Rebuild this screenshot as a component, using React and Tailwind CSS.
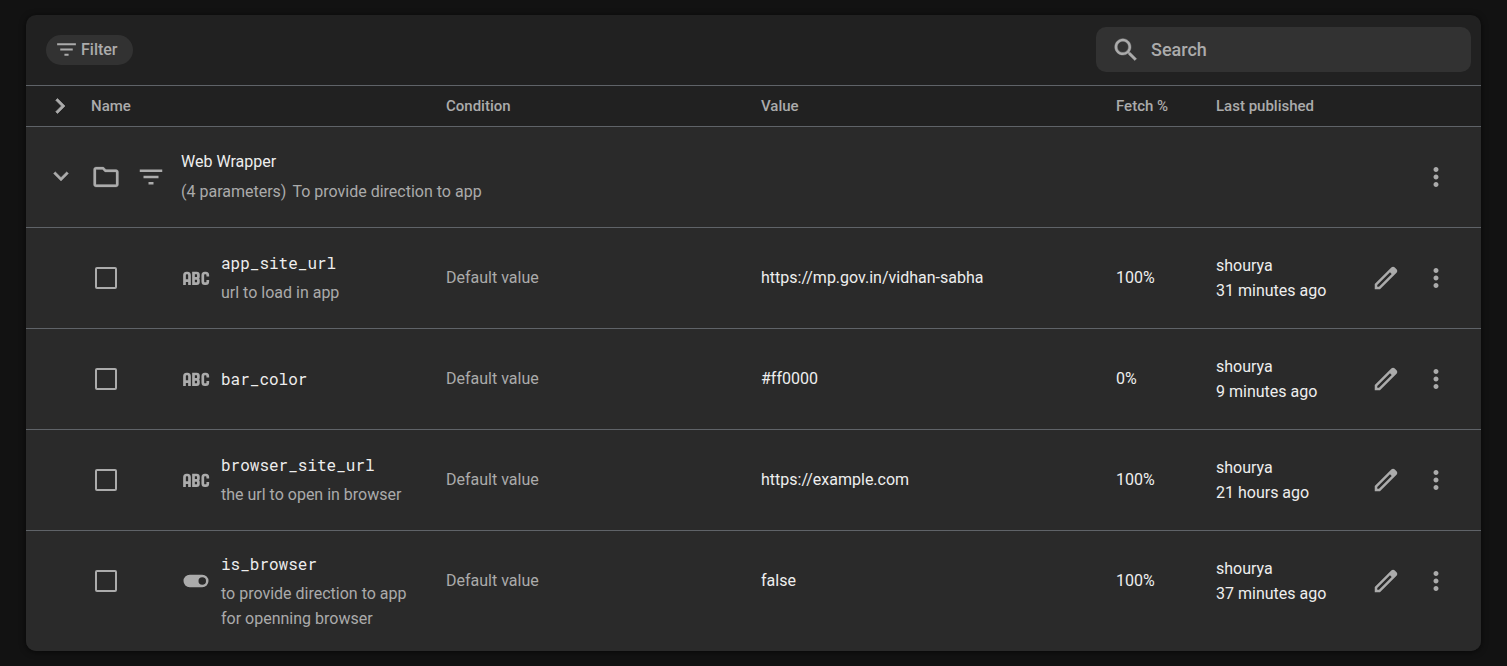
import React from "react";

const Icon = ({ d, weight = 0, className = "size-[30px]" }) => (
  <svg
    viewBox="0 0 24 24"
    fill="currentColor"
    stroke="currentColor"
    strokeWidth={weight}
    className={"shrink-0 " + className}
    aria-hidden="true"
  >
    <path d={d} fillRule="evenodd" />
  </svg>
);

const icons = {
  filter: "M10 18h4v-2h-4v2zM3 6v2h18V6H3zm3 7h12v-2H6v2z",
  right: "M10 6L8.59 7.41 13.17 12l-4.58 4.59L10 18l6-6z",
  down: "M7.41 8.59L12 13.17l4.59-4.58L18 10l-6 6-6-6z",
  folder: "M9.17 6l2 2H20v10H4V6h5.17M10 4H4c-1.1 0-1.99.9-1.99 2L2 18c0 1.1.9 2 2 2h16c1.1 0 2-.9 2-2V8c0-1.1-.9-2-2-2h-8l-2-2z",
  search: "M15.5 14h-.79l-.28-.27C15.41 12.59 16 11.11 16 9.5 16 5.91 13.09 3 9.5 3S3 5.91 3 9.5 5.91 16 9.5 16c1.61 0 3.09-.59 4.23-1.57l.27.28v.79l5 4.99L20.49 19l-4.99-5zm-6 0C7.01 14 5 11.99 5 9.5S7.01 5 9.5 5 14 7.01 14 9.5 11.99 14 9.5 14z",
  more: "M12 8c1.1 0 2-.9 2-2s-.9-2-2-2-2 .9-2 2 .9 2 2 2zm0 2c-1.1 0-2 .9-2 2s.9 2 2 2 2-.9 2-2-.9-2-2-2zm0 6c-1.1 0-2 .9-2 2s.9 2 2 2 2-.9 2-2-.9-2-2-2z",
  edit: "M20.41 4.94l-1.35-1.35c-.78-.78-2.05-.78-2.83 0L3 16.82V21h4.18L20.41 7.77c.79-.78.79-2.05 0-2.83zM6.35 19H5v-1.35L15.200 7.450l1.350 1.350L6.35 19z",
  toggle: "M7 7h10a5 5 0 0 1 0 10H7A5 5 0 0 1 7 7zm10 2a3 3 0 1 0 0 6 3 3 0 0 0 0-6z",
};

const AbcIcon = () => (
  <svg
    viewBox="0 0 30 30"
    fill="none"
    stroke="currentColor"
    strokeWidth="2.700"
    className="size-[30px] shrink-0"
    aria-label="String"
    role="img"
  >
    <path d="M3.500 22V12.200q0-2.200 2-2.200h1q2 0 2 2.200V22M3.500 17.600h5" />
    <path d="M12.500 10v10.600h3.200q1.700 0 1.700-1.700v-1.700q0-1.700-1.500-1.900 1.500-.2 1.500-1.900v-1.700q0-1.700-1.700-1.700zM12.500 15.300h3.400" />
    <path d="M26.800 13.600v-1.400q0-2.200-2-2.200h-1q-2 0-2 2.200v6.200q0 2.200 2 2.200h1q2 0 2-2.200v-1.400" />
  </svg>
);

const rows = [
  { name: "app_site_url", note: "url to load in app", value: "https://mp.gov.in/vidhan-sabha", fetch: "100%", ago: "31 minutes ago" },
  { name: "bar_color", value: "#ff0000", fetch: "0%", ago: "9 minutes ago" },
  { name: "browser_site_url", note: "the url to open in browser", value: "https://example.com", fetch: "100%", ago: "21 hours ago" },
  { name: "is_browser", note: "to provide direction to app for openning browser", value: "false", fetch: "100%", ago: "37 minutes ago", bool: true },
];

const Action = ({ label, icon }) => (
  <button type="button" aria-label={label} className="flex h-[100px] w-[50px] items-center justify-center text-[#ababab]">
    <Icon d={icon} />
  </button>
);

const Cell = ({ children, className = "" }) => (
  <td className={"align-top " + className}>
    <div className="flex h-[99px] items-center">{children}</div>
  </td>
);

export default function App() {
  return (
    <div className="min-h-screen bg-[#121212] px-[26px] py-[15px] font-['Roboto',sans-serif] text-base leading-[25px] text-[#eeeeee]">
      <main className="overflow-hidden rounded-[10px] bg-[#212121] shadow-[0_1px_6px_rgba(0,0,0,0.6)]">
        <div className="flex items-start justify-between pt-3 pr-2.5 pb-[13px] pl-5">
          <button type="button" className="mt-2 flex h-[30px] items-center gap-0.5 rounded-full bg-[#323232] pr-[15px] pb-px pl-2 font-medium text-[#ababab]">
            <Icon d={icons.filter} className="size-[25px]" />
            Filter
          </button>
          <label className="flex h-[45px] w-[375px] items-center gap-2.5 rounded-[10px] bg-[#323232] px-[15px] text-[#ababab]">
            <Icon d={icons.search} weight={0.3} />
            <input type="text" aria-label="Search" placeholder="Search" className="min-w-0 flex-1 bg-transparent text-lg font-medium outline-none placeholder:text-[#ababab]" />
          </label>
        </div>
        <table className="w-full table-fixed text-left">
          <colgroup>
            <col className="w-[65px]" />
            <col />
            <col className="w-[315px]" />
            <col />
            <col className="w-[100px]" />
            <col className="w-[145px]" />
            <col className="w-[50px]" />
            <col className="w-[70px]" />
          </colgroup>
          <thead>
            <tr className="h-[41px] border-t border-[#5f6368] text-[15px] text-[#ababab] [&>th]:font-medium">
              <th>
                <button type="button" aria-label="Expand all" className="flex h-10 w-[68px] items-center justify-center">
                  <Icon d={icons.right} weight={0.5} />
                </button>
              </th>
              <th>Name</th>
              <th>Condition</th>
              <th>Value</th>
              <th>Fetch %</th>
              <th>Last published</th>
              <th aria-label="Edit" />
              <th aria-label="More" />
            </tr>
          </thead>
          <tbody className="bg-[#2a2a2a]">
            <tr className="border-t border-[#5f6368]">
              <td>
                <button type="button" aria-label="Collapse group" className="flex h-[100px] w-[70px] items-center justify-center pb-0.5 text-[#ababab]">
                  <Icon d={icons.down} weight={0.3} />
                </button>
              </td>
              <td colSpan={6}>
                <div className="flex items-center gap-[15px] text-[#ababab]">
                  <Icon d={icons.folder} weight={0.2} />
                  <Icon d={icons.filter} />
                  <div className="pb-0.5">
                    <div className="mb-[5px] text-[#eeeeee]">Web Wrapper</div>
                    <div className="flex gap-1.5">
                      <span>(4 parameters)</span>
                      <span>To provide direction to app</span>
                    </div>
                  </div>
                </div>
              </td>
              <td><Action label="More actions for Web Wrapper" icon={icons.more} /></td>
            </tr>
            {rows.map((r) => (
              <tr key={r.name} className="border-t border-[#5f6368]">
                <td />
                <td className="align-top">
                  <div className="flex items-start pr-5">
                    <label className="flex h-[100px] w-[30px] shrink-0 items-center justify-center">
                      <input type="checkbox" aria-label={"Select " + r.name} className="size-[22px] appearance-none rounded-xs border-2 border-[#ababab] checked:bg-[#ababab]" />
                    </label>
                    <div className="ml-[60px] flex h-[100px] items-center text-[#ababab]">
                      {r.bool ? <Icon d={icons.toggle} /> : <AbcIcon />}
                    </div>
                    <div className="ml-2.5 flex min-h-[99px] min-w-0 flex-col justify-center py-5">
                      <div className="font-['Roboto_Mono','DejaVu_Sans_Mono',monospace]">{r.name}</div>
                      {r.note && <div className="mt-[5px] text-[#ababab]">{r.note}</div>}
                    </div>
                  </div>
                </td>
                <Cell className="text-[#ababab]">Default value</Cell>
                <Cell>{r.value}</Cell>
                <Cell>{r.fetch}</Cell>
                <Cell>
                  <div>
                    <div>shourya</div>
                    <div>{r.ago}</div>
                  </div>
                </Cell>
                <td className="align-top"><Action label={"Edit " + r.name} icon={icons.edit} /></td>
                <td className="align-top"><Action label={"More actions for " + r.name} icon={icons.more} /></td>
              </tr>
            ))}
          </tbody>
        </table>
      </main>
    </div>
  );
}
